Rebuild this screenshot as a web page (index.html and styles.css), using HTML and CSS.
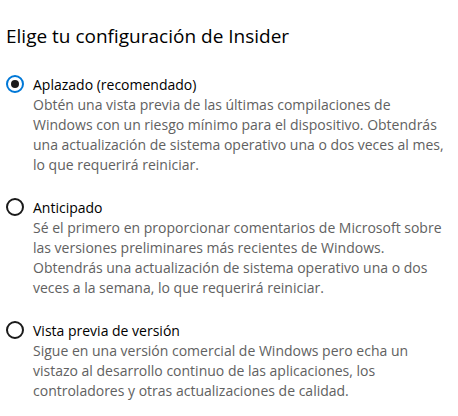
FILE: index.html
```html
<!DOCTYPE html>
<html lang="es">
<head>
<meta charset="utf-8">
<link rel="stylesheet" href="styles.css">
</head>
<body>
<main class="page">
  <h1 class="title">Elige tu configuración de Insider</h1>
  <div class="options">
    <label class="option">
      <span class="radio checked"></span>
      <span class="text">
        <span class="label">Aplazado (recomendado)</span>
        <span class="desc">Obtén una vista previa de las últimas compilaciones de<br>Windows con un riesgo mínimo para el dispositivo. Obtendrás<br>una actualización de sistema operativo una o dos veces al mes,<br>lo que requerirá reiniciar.</span>
      </span>
    </label>
    <label class="option">
      <span class="radio"></span>
      <span class="text">
        <span class="label">Anticipado</span>
        <span class="desc">Sé el primero en proporcionar comentarios de Microsoft sobre<br>las versiones preliminares más recientes de Windows.<br>Obtendrás una actualización de sistema operativo una o dos<br>veces a la semana, lo que requerirá reiniciar.</span>
      </span>
    </label>
    <label class="option">
      <span class="radio"></span>
      <span class="text">
        <span class="label">Vista previa de versión</span>
        <span class="desc">Sigue en una versión comercial de Windows pero echa un<br>vistazo al desarrollo continuo de las aplicaciones, los<br>controladores y otras actualizaciones de calidad.</span>
      </span>
    </label>
  </div>
</main>
</body>
</html>
```
FILE: styles.css
```css
html, body {
  margin: 0;
  padding: 0;
  background: #ffffff;
}
.page {
  font-family: "Open Sans", "Noto Sans", sans-serif;
  padding: 22px 6px 0 6px;
  color: #000;
}
.title {
  margin: 0;
  font-size: 19px;
  font-weight: 400;
  line-height: 28px;
  color: #000;
}
.options {
  display: flex;
  flex-direction: column;
  gap: 23px;
  margin-top: 25px;
}
.option {
  display: flex;
  align-items: flex-start;
  gap: 9px;
}
.radio {
  flex: none;
  position: relative;
  width: 14px;
  height: 14px;
  margin-top: 0;
  border: 2px solid #1a1a1a;
  border-radius: 50%;
}
.radio.checked {
  border-color: #0078d7;
}
.radio.checked::after {
  content: "";
  position: absolute;
  left: 3px;
  top: 3px;
  width: 8px;
  height: 8px;
  border-radius: 50%;
  background: #1a1a1a;
}
.text {
  display: flex;
  flex-direction: column;
  font-size: 14px;
  line-height: 20px;
  white-space: nowrap;
}
.label {
  color: #000;
}
.desc {
  color: #616161;
}
```
